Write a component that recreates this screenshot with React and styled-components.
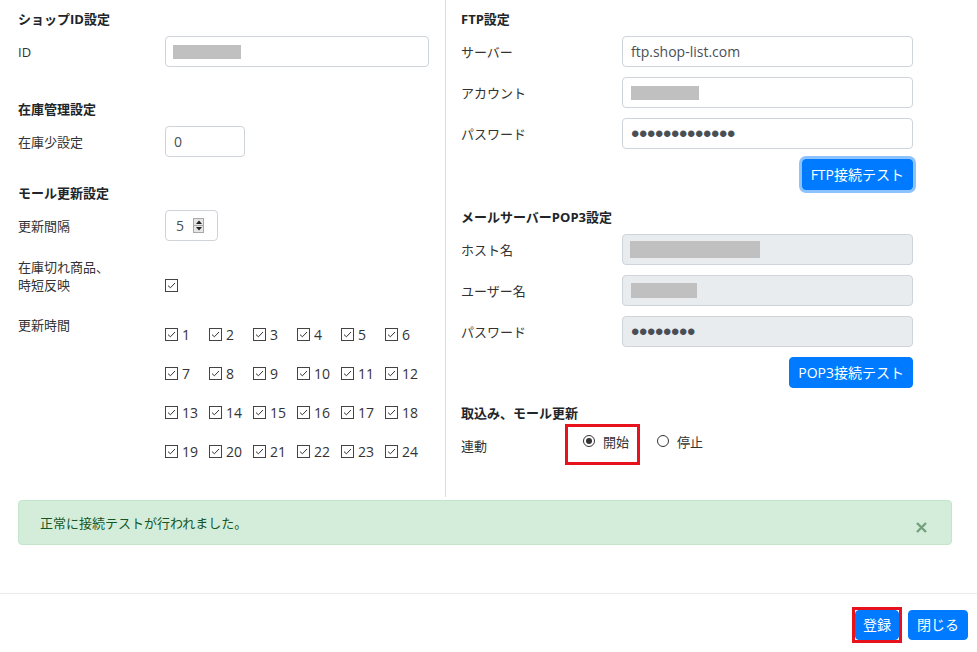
import React from "react";
import styled, { createGlobalStyle } from "styled-components";

const GlobalStyle = createGlobalStyle`
  body {
    margin: 0;
    background: #fff;
    font-family: "Open Sans", "Noto Sans CJK JP", sans-serif;
    color: #212529;
  }
`;

const Page = styled.div`
  width: 977px;
  height: 652px;
  overflow: hidden;
  background: #fff;
`;

const Body = styled.div`
  display: flex;
  align-items: stretch;
`;

const Column = styled.div`
  box-sizing: border-box;
  display: flex;
  flex-direction: column;
  padding: 8px ${(p) => p.$padRight}px ${(p) => p.$padBottom}px ${(p) => p.$padLeft}px;
  width: ${(p) => (p.$width ? p.$width + "px" : "auto")};
  flex: ${(p) => (p.$width ? "none" : "1")};
  border-right: ${(p) => (p.$divider ? "1px solid #dcdcdc" : "none")};
`;

const SectionTitle = styled.div`
  font-size: 13px;
  font-weight: 700;
  line-height: 22px;
  height: 22px;
  margin-top: ${(p) => p.$mt || 0}px;
`;

const FieldRow = styled.div`
  display: grid;
  grid-template-columns: ${(p) => p.$labelWidth}px 1fr;
  align-items: ${(p) => p.$align || "center"};
  margin-top: ${(p) => p.$mt || 0}px;
`;

const Label = styled.div`
  font-size: 13px;
  line-height: 18px;
  color: #333;
`;

const TextBox = styled.div`
  box-sizing: border-box;
  display: flex;
  align-items: center;
  height: 31px;
  width: ${(p) => (p.$width ? p.$width + "px" : "100%")};
  padding: 0 ${(p) => p.$padX || 8}px;
  border: 1px solid #ced4da;
  border-radius: 4px;
  background: ${(p) => (p.$disabled ? "#e9ecef" : "#fff")};
  color: #495057;
  font-size: 14px;
  line-height: 20px;
`;

const Redacted = styled.span`
  display: inline-block;
  width: ${(p) => p.$w}px;
  height: ${(p) => p.$h}px;
  background: #c0c0c0;
`;

const Dots = styled.span`
  font-family: "Liberation Sans", sans-serif;
  font-size: 24px;
  line-height: 20px;
  letter-spacing: -0.4px;
  color: #4a4f55;
  margin-top: 1px;
`;

const NumberValue = styled.span`
  flex: 1;
  font-size: 14px;
`;

const Spinner = styled.span`
  display: flex;
  flex-direction: column;
  width: 11px;
  height: 15px;
  border: 1px solid #a9a9a9;
  box-sizing: border-box;
  background: #e6e6e6;
  margin-right: 3px;
`;

const SpinHalf = styled.span`
  flex: 1;
  display: flex;
  align-items: center;
  justify-content: center;
  border-top: ${(p) => (p.$lower ? "1px solid #a9a9a9" : "none")};
`;

const CheckBoxBox = styled.span`
  box-sizing: border-box;
  display: inline-flex;
  align-items: center;
  justify-content: center;
  width: 13px;
  height: 13px;
  border: 1px solid #444;
  background: #fff;
  flex: none;
`;

const CheckCell = styled.div`
  display: flex;
  align-items: center;
  height: 18px;
`;

const HourGrid = styled.div`
  display: grid;
  grid-template-columns: repeat(6, 44px);
  grid-auto-rows: 20px;
  row-gap: 19px;
  padding-top: 8px;
`;

const HourItem = styled.label`
  display: flex;
  align-items: center;
  gap: 4px;
  font-size: 14px;
  color: #333;
`;

const ButtonRow = styled.div`
  display: flex;
  justify-content: flex-end;
  gap: 9px;
  margin-top: ${(p) => p.$mt || 0}px;
`;

const Button = styled.button`
  position: relative;
  box-sizing: border-box;
  height: ${(p) => p.$h || 31}px;
  padding: 0 ${(p) => p.$padX || 8}px;
  border: 1px solid #007bff;
  border-radius: 4px;
  background: #007bff;
  color: #fff;
  font-family: "Open Sans", "Noto Sans CJK JP", sans-serif;
  font-size: 14px;
  line-height: 20px;
  cursor: pointer;
  box-shadow: ${(p) => (p.$focus ? "0 0 0 3px rgba(0, 123, 255, 0.45)" : "none")};

  &::after {
    content: "";
    display: ${(p) => (p.$marked ? "block" : "none")};
    position: absolute;
    inset: -4px;
    border: 3px solid #e8121d;
  }
`;

const RadioRow = styled.div`
  display: flex;
  align-items: stretch;
`;

const RadioLabelCell = styled.div`
  width: 104px;
  display: flex;
  align-items: center;
  padding-top: 3px;
`;

const RadioOption = styled.label`
  display: flex;
  align-items: center;
  height: 20px;
  padding: ${(p) => (p.$marked ? "4px 8px 11px 15px" : "7px 0 14px 17px")};
  border: ${(p) => (p.$marked ? "3px solid #e8121d" : "none")};
  font-size: 13px;
  color: #333;
`;

const RadioCircle = styled.span`
  box-sizing: border-box;
  width: 12px;
  height: 12px;
  border-radius: 50%;
  border: 1px solid #333;
  margin-right: 8px;
  display: flex;
  align-items: center;
  justify-content: center;
  &::after {
    content: "";
    display: ${(p) => (p.$checked ? "block" : "none")};
    width: 6px;
    height: 6px;
    border-radius: 50%;
    background: #333;
  }
`;

const Alert = styled.div`
  box-sizing: border-box;
  display: flex;
  align-items: center;
  justify-content: space-between;
  height: 45px;
  margin: 3px 25px 0 18px;
  padding: 0 24px 0 21px;
  background: #d4edda;
  border: 1px solid #c3e6cb;
  border-radius: 4px;
  color: #155724;
  font-size: 13px;
`;

const CloseButton = styled.span`
  display: flex;
  margin-top: 10px;
  opacity: 0.5;
`;

const Footer = styled.div`
  display: flex;
  justify-content: flex-end;
  gap: 9px;
  margin-top: 48px;
  padding: 16px 9px 12px;
  border-top: 1px solid #e9ecef;
`;

function Check() {
  return (
    <CheckBoxBox>
      <svg width="11" height="11" viewBox="0 0 11 11">
        <path d="M2 5.6 L4.4 7.8 L9 3" fill="none" stroke="#333" strokeWidth="1" />
      </svg>
    </CheckBoxBox>
  );
}

function NumberBox() {
  return (
    <TextBox $width={53} $padX={10}>
      <NumberValue>5</NumberValue>
      <Spinner>
        <SpinHalf>
          <svg width="6" height="4" viewBox="0 0 6 4">
            <path d="M0 4 L3 0.5 L6 4 Z" fill="#222" />
          </svg>
        </SpinHalf>
        <SpinHalf $lower>
          <svg width="6" height="4" viewBox="0 0 6 4">
            <path d="M0 0 L3 3.5 L6 0 Z" fill="#222" />
          </svg>
        </SpinHalf>
      </Spinner>
    </TextBox>
  );
}

const hours = Array.from({ length: 24 }, (_, i) => i + 1);

export default function App() {
  return (
    <Page>
      <GlobalStyle />
      <Body>
        <Column $width={446} $divider $padLeft={18} $padRight={16} $padBottom={36}>
          <SectionTitle>ショップID設定</SectionTitle>
          <FieldRow $labelWidth={147} $mt={6}>
            <Label>ID</Label>
            <TextBox $padX={7}>
              <Redacted $w={68} $h={14} />
            </TextBox>
          </FieldRow>

          <SectionTitle $mt={31}>在庫管理設定</SectionTitle>
          <FieldRow $labelWidth={147} $mt={6}>
            <Label>在庫少設定</Label>
            <TextBox $width={80}>0</TextBox>
          </FieldRow>

          <SectionTitle $mt={25}>モール更新設定</SectionTitle>
          <FieldRow $labelWidth={147} $mt={6}>
            <Label>更新間隔</Label>
            <NumberBox />
          </FieldRow>
          <FieldRow $labelWidth={147} $mt={17} $align="end">
            <Label>
              在庫切れ商品、
              <br />
              時短反映
            </Label>
            <CheckCell>
              <Check />
            </CheckCell>
          </FieldRow>
          <FieldRow $labelWidth={147} $mt={22} $align="start">
            <Label>更新時間</Label>
            <HourGrid>
              {hours.map((h) => (
                <HourItem key={h}>
                  <Check />
                  {h}
                </HourItem>
              ))}
            </HourGrid>
          </FieldRow>
        </Column>

        <Column $padLeft={15} $padRight={64} $padBottom={32}>
          <SectionTitle>FTP設定</SectionTitle>
          <FieldRow $labelWidth={161} $mt={6}>
            <Label>サーバー</Label>
            <TextBox>ftp.shop-list.com</TextBox>
          </FieldRow>
          <FieldRow $labelWidth={161} $mt={10}>
            <Label>アカウント</Label>
            <TextBox>
              <Redacted $w={68} $h={14} />
            </TextBox>
          </FieldRow>
          <FieldRow $labelWidth={161} $mt={10}>
            <Label>パスワード</Label>
            <TextBox>
              <Dots>•••••••••••••</Dots>
            </TextBox>
          </FieldRow>
          <ButtonRow $mt={10}>
            <Button $focus>FTP接続テスト</Button>
          </ButtonRow>

          <SectionTitle $mt={16}>メールサーバーPOP3設定</SectionTitle>
          <FieldRow $labelWidth={161} $mt={6}>
            <Label>ホスト名</Label>
            <TextBox $disabled $padX={7}>
              <Redacted $w={130} $h={17} />
            </TextBox>
          </FieldRow>
          <FieldRow $labelWidth={161} $mt={10}>
            <Label>ユーザー名</Label>
            <TextBox $disabled>
              <Redacted $w={66} $h={15} />
            </TextBox>
          </FieldRow>
          <FieldRow $labelWidth={161} $mt={10}>
            <Label>パスワード</Label>
            <TextBox $disabled>
              <Dots>••••••••</Dots>
            </TextBox>
          </FieldRow>
          <ButtonRow $mt={10}>
            <Button>POP3接続テスト</Button>
          </ButtonRow>

          <SectionTitle $mt={14}>取込み、モール更新</SectionTitle>
          <RadioRow>
            <RadioLabelCell>
              <Label>連動</Label>
            </RadioLabelCell>
            <RadioOption $marked>
              <RadioCircle $checked />
              開始
            </RadioOption>
            <RadioOption>
              <RadioCircle />
              停止
            </RadioOption>
          </RadioRow>
        </Column>
      </Body>

      <Alert>
        <span>正常に接続テストが行われました。</span>
        <CloseButton>
          <svg width="11" height="11" viewBox="0 0 11 11">
            <path d="M1 1 L10 10 M10 1 L1 10" stroke="#155724" strokeWidth="2.4" />
          </svg>
        </CloseButton>
      </Alert>

      <Footer>
        <Button $h={30} $padX={7} $marked>
          登録
        </Button>
        <Button $h={30} $padX={8}>
          閉じる
        </Button>
      </Footer>
    </Page>
  );
}
